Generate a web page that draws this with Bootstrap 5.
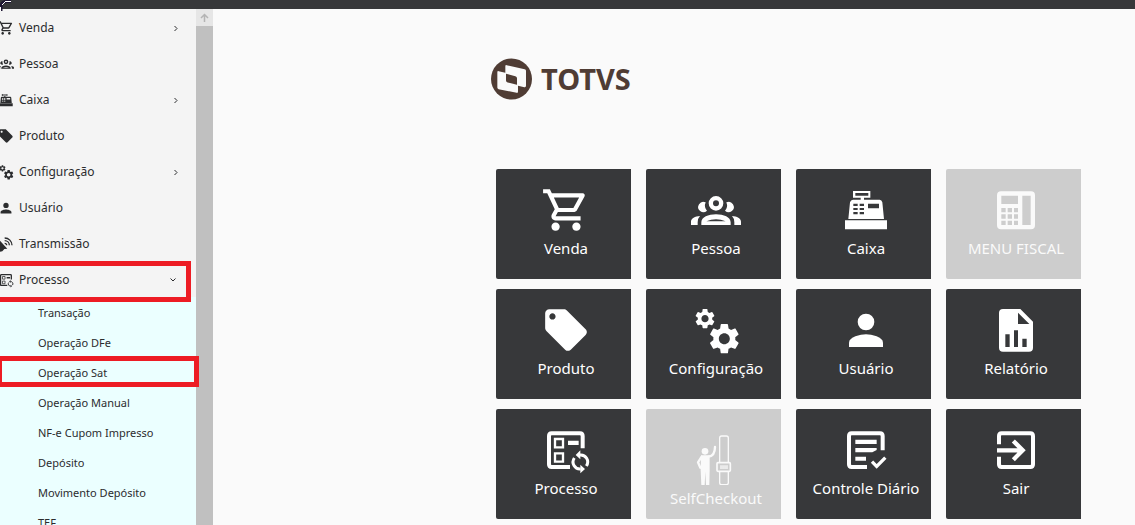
<!DOCTYPE html>
<html lang="pt-BR">
<head>
<meta charset="utf-8">
<meta name="viewport" content="width=device-width, initial-scale=1">
<title>TOTVS</title>
<link href="https://cdn.jsdelivr.net/npm/bootstrap@5.3.0/dist/css/bootstrap.min.css" rel="stylesheet">
<style>
  :root { --ink: #37383a; --panel: #f4f4f4; --sub: #ebffff; --alert: #ed1c24; }
  body { font-family: "Noto Sans", sans-serif; background: #fafafa; color: #2b2c2e; }
  .topbar { height: 9px; background: var(--ink); }
  .topbar svg { top: 0; left: 0; }
  .side-panel { width: 213px; }
  .side-menu { background: var(--panel); }
  .menu-link { height: 36px; padding: 2px 16px 0 0; gap: 5px; font-size: 12px; line-height: 18px; color: inherit; text-decoration: none; }
  .menu-link .glyph { width: 16px; height: 16px; margin-left: -2px; }
  .menu-link .chev { width: 8px; height: 8px; }
  .menu-link.is-open { padding-right: 19px; }
  .sub-menu { background: var(--sub); }
  .sub-link { height: 30px; padding: 2px 0 0 38px; font-size: 11px; line-height: 16px; color: inherit; text-decoration: none; }
  .hl { border: 5px solid var(--alert); pointer-events: none; z-index: 2; }
  .hl-group { left: -5px; right: 5px; top: 0; bottom: -5px; }
  .hl-item { left: -3px; right: -3px; top: -1px; bottom: 0; }
  .scroll-rail { width: 17px; background: #c0c0c0; }
  .scroll-up { height: 17px; background: #e6e6e6; }
  .workspace { padding-left: 229px; }
  .board { width: 585px; }
  .brand { margin: 49px 0 69px -5px; gap: 9px; color: #4f3c34; }
  .brand-name { font-size: 29px; line-height: 42px; font-weight: 700; }
  .tiles { display: grid; grid-template-columns: repeat(4, 135px); gap: 10px 15px; }
  .tile { height: 110px; padding: 16px 0 0 5px; border: 0; border-radius: 2px 0 0 2px; background: var(--ink); color: #fff; font-size: 15px; line-height: 22px; }
  .tile svg { width: 50px; height: 50px; margin-bottom: 2px; }
  .tile .tall { height: 60px; }
  .tile:disabled { background: #cdcdcd; color: #fafafa; }
</style>
</head>
<body class="vh-100 overflow-hidden d-flex flex-column">

<svg class="d-none" aria-hidden="true">
  <symbol id="i-cart" viewBox="0 0 24 24"><path fill="currentColor" d="M15.55 13c.75 0 1.41-.41 1.75-1.03l3.58-6.49A.996.996 0 0 0 20.01 4H5.21l-.94-2H1v2h2l3.6 7.59-1.35 2.44C4.52 15.37 5.48 17 7 17h12v-2H7l1.100-2h7.450zM6.160 6h12.150l-2.760 5H8.530L6.160 6zM7 18c-1.100 0-1.990.9-1.990 2S5.900 22 7 22s2-.9 2-2-.9-2-2-2zm10 0c-1.100 0-1.990.9-1.990 2s.89 2 1.990 2 2-.9 2-2-.9-2-2-2z"/></symbol>
  <symbol id="i-people" viewBox="0 0 150 150"><circle cx="75" cy="55" r="15.500" fill="none" stroke="currentColor" stroke-width="13"/><path fill="currentColor" fill-rule="evenodd" d="M44 52A15.500 15.500 0 1 0 48 77Q38 66 44 52zM106 52A15.500 15.500 0 1 1 102 77Q112 66 106 52zM31 120V112C31 96 52 88 75 88s44 8 44 24v8zM46 109H104Q75 97 46 109zM0 120V110C0 100 12 94 27 93Q20 100 20 112V120zM150 120V110C150 100 138 94 123 93Q130 100 130 112V120z"/></symbol>
  <symbol id="i-register" viewBox="0 0 150 150"><path fill="currentColor" fill-rule="evenodd" d="M36 18H88V38H69V44H116Q122 44 124 52L129 102H22L27 52Q29 44 36 44H59V38H36zM43 24V32H82V24zM81 56V70H114V56zM37 56h13v7H37zM56 56h13v7H56zM37 69h13v6H37zM56 69h13v6H56zM37 81h13v7H37zM56 81h13v7H56zM12 106H138V133H12z"/></symbol>
  <symbol id="i-calc" viewBox="0 0 150 150"><path fill="currentColor" fill-rule="evenodd" d="M30 19H120Q132 19 132 31V121Q132 133 120 133H30Q18 133 18 121V31Q18 19 30 19zM31 32V57H81V32zM94 32V120H119V32zM31 69h13v13H31zM50 69h13v13H50zM69 69h12v13H69zM31 88h13v13H31zM50 88h13v13H50zM69 88h12v13H69zM31 107h13v13H31zM50 107h13v13H50zM69 107h12v13H69z"/></symbol>
  <symbol id="i-tag" viewBox="0 0 24 24"><path fill="currentColor" d="M21.410 11.580l-9-9C12.050 2.220 11.550 2 11 2H4c-1.100 0-2 .9-2 2v7c0 .55.22 1.050.59 1.420l9 9c.36.36.86.58 1.410.58.55 0 1.050-.22 1.410-.59l7-7c.37-.36.59-.86.59-1.410 0-.55-.23-1.060-.59-1.420zM5.500 7C4.670 7 4 6.330 4 5.500S4.670 4 5.500 4 7 4.670 7 5.500 6.330 7 5.500 7z"/></symbol>
  <symbol id="i-gear" viewBox="0 0 24 24"><path fill="currentColor" d="M19.140 12.940c.04-.3.06-.61.06-.94 0-.32-.02-.64-.07-.94l2.030-1.580c.18-.14.23-.41.12-.61l-1.920-3.320c-.12-.22-.37-.29-.59-.22l-2.390.96c-.5-.38-1.030-.7-1.620-.94l-.36-2.540c-.04-.24-.24-.41-.48-.41h-3.840c-.24 0-.43.17-.47.41l-.36 2.540c-.59.24-1.130.57-1.620.94l-2.390-.96c-.22-.08-.47 0-.59.22L2.740 8.870c-.12.21-.08.47.12.61l2.030 1.580c-.05.3-.09.63-.09.94s.02.64.07.94l-2.030 1.580c-.18.14-.23.41-.12.61l1.920 3.320c.12.22.37.29.59.22l2.390-.96c.5.38 1.030.7 1.620.94l.36 2.540c.05.24.24.41.48.41h3.840c.24 0 .44-.17.47-.41l.36-2.540c.59-.24 1.130-.56 1.620-.94l2.390.96c.22.08.47 0 .59-.22l1.920-3.320c.12-.22.07-.47-.12-.61l-2.010-1.580zM12 15.600c-1.980 0-3.600-1.620-3.600-3.600s1.620-3.600 3.600-3.600 3.600 1.620 3.600 3.600-1.620 3.600-3.600 3.600z"/></symbol>
  <symbol id="i-gears" viewBox="0 0 150 150"><use href="#i-gear" x="6" y="5" width="72" height="72"/><use href="#i-gear" x="45" y="46" width="110" height="110"/></symbol>
  <symbol id="i-user" viewBox="0 0 150 150"><circle cx="75" cy="51" r="25" fill="currentColor"/><path fill="currentColor" d="M24 126V113C24 96 58 88 75 88s51 8 51 25v13z"/></symbol>
  <symbol id="i-dish" viewBox="0 0 48 48"><path fill="currentColor" d="M4 12L28 38 19 39 13 46 4 48z"/><path fill="none" stroke="currentColor" stroke-width="4" d="M20 6A22 22 0 0 1 42 28M20 14A14 14 0 0 1 34 28M20 22A6 6 0 0 1 26 28"/></symbol>
  <symbol id="i-report" viewBox="0 0 150 150"><path fill="currentColor" fill-rule="evenodd" d="M36 12H88L126 50V128Q126 140 114 140H36Q24 140 24 128V24Q24 12 36 12zM81 23V57H115zM43 88V126H56V88zM69 76V126H81V76zM94 101V126H107V101z"/></symbol>
  <symbol id="i-process" viewBox="0 0 150 150"><path fill="none" stroke="currentColor" stroke-width="12" d="M87 126H32Q24 126 24 118V33Q24 25 32 25H117Q125 25 125 33V70"/><path fill="none" stroke="currentColor" stroke-width="7" d="M42 42H66V67H42zM42 85H66V110H42z"/><path fill="currentColor" d="M81 47H113V60H81zM118 76V103L104 90zM118 119V145L132 132z"/><path fill="none" stroke="currentColor" stroke-width="9" d="M116 90A21 21 0 0 1 136 123M100 99A21 21 0 0 0 119 132"/></symbol>
  <symbol id="i-kiosk" viewBox="0 0 150 180"><circle cx="42" cy="79" r="10" fill="currentColor"/><path fill="currentColor" d="M30 91H56V136L55 180H45L43 140 41 180H31L29 136z"/><path fill="none" stroke="currentColor" stroke-width="7" stroke-linecap="round" stroke-linejoin="round" d="M32 95L21 112 28 128M53 95Q72 92 72 66"/><rect x="86" y="33" width="26" height="146" rx="6" fill="none" stroke="currentColor" stroke-width="4"/><rect x="78" y="113" width="40" height="26" rx="3" fill="#cdcdcd" stroke="currentColor" stroke-width="5"/><path stroke="currentColor" stroke-width="4" d="M90 121V132M96 121V132M102 121V132M108 121V132"/></symbol>
  <symbol id="i-control" viewBox="0 0 150 150"><path fill="none" stroke="currentColor" stroke-width="12" d="M78 126H32Q24 126 24 118V33Q24 25 32 25H117Q125 25 125 33V76"/><path fill="currentColor" d="M43 44H107V57H43zM43 69H107V75L94 82H43zM43 95H75V107H43z"/><path fill="none" stroke="currentColor" stroke-width="10" d="M93 110L107 124 133 98"/></symbol>
  <symbol id="i-exit" viewBox="0 0 150 150"><path fill="none" stroke="currentColor" stroke-width="12" d="M24 58V33Q24 25 32 25H118Q126 25 126 33V118Q126 126 118 126H32Q24 126 24 118V95"/><path fill="none" stroke="currentColor" stroke-width="13" d="M18 76H92M67 48L95 76 67 104"/></symbol>
  <symbol id="i-chev" viewBox="0 0 8 8"><path fill="none" stroke="currentColor" stroke-width="1" d="M2.500 2L5 4.500 2.500 7"/></symbol>
  <symbol id="i-chev-down" viewBox="0 0 8 8"><path fill="none" stroke="currentColor" stroke-width="1" d="M1.500 2.500L4 5 6.500 2.500"/></symbol>
</svg>

<header class="topbar flex-shrink-0 position-relative">
  <svg class="position-absolute" width="12" height="12" viewBox="0 0 12 12" fill="none" aria-hidden="true"><path stroke="#1e1633" stroke-width="3" d="M1 11V7Q1 2 6 1.500H11"/><path stroke="#fff" d="M.5 11V7M2 5L5 2M5 1.500H11"/></svg>
</header>

<div class="d-flex flex-grow-1 overflow-hidden">
  <aside class="side-panel d-flex flex-shrink-0">
    <nav class="side-menu flex-grow-1" aria-label="Menu principal">
      <a href="#" class="menu-link d-flex align-items-center"><svg class="glyph"><use href="#i-cart"/></svg>Venda<svg class="chev ms-auto"><use href="#i-chev"/></svg></a>
      <a href="#" class="menu-link d-flex align-items-center"><svg class="glyph"><use href="#i-people"/></svg>Pessoa</a>
      <a href="#" class="menu-link d-flex align-items-center"><svg class="glyph"><use href="#i-register"/></svg>Caixa<svg class="chev ms-auto"><use href="#i-chev"/></svg></a>
      <a href="#" class="menu-link d-flex align-items-center"><svg class="glyph"><use href="#i-tag"/></svg>Produto</a>
      <a href="#" class="menu-link d-flex align-items-center"><svg class="glyph"><use href="#i-gears"/></svg>Configuração<svg class="chev ms-auto"><use href="#i-chev"/></svg></a>
      <a href="#" class="menu-link d-flex align-items-center"><svg class="glyph"><use href="#i-user"/></svg>Usuário</a>
      <a href="#" class="menu-link d-flex align-items-center"><svg class="glyph"><use href="#i-dish"/></svg>Transmissão</a>
      <a href="#" class="menu-link is-open d-flex align-items-center position-relative"><svg class="glyph"><use href="#i-process"/></svg>Processo<svg class="chev ms-auto"><use href="#i-chev-down"/></svg><span class="hl hl-group position-absolute"></span></a>
      <div class="sub-menu">
        <a href="#" class="sub-link d-flex align-items-center">Transação</a>
        <a href="#" class="sub-link d-flex align-items-center">Operação DFe</a>
        <a href="#" class="sub-link d-flex align-items-center position-relative">Operação Sat<span class="hl hl-item position-absolute"></span></a>
        <a href="#" class="sub-link d-flex align-items-center">Operação Manual</a>
        <a href="#" class="sub-link d-flex align-items-center">NF-e Cupom Impresso</a>
        <a href="#" class="sub-link d-flex align-items-center">Depósito</a>
        <a href="#" class="sub-link d-flex align-items-center">Movimento Depósito</a>
        <a href="#" class="sub-link d-flex align-items-center">TEF</a>
      </div>
    </nav>
    <div class="scroll-rail" aria-hidden="true">
      <div class="scroll-up d-flex align-items-center justify-content-center"><svg width="9" height="9" viewBox="0 0 9 9" fill="none" stroke="#b4b4b4" stroke-width="1.500"><path d="M4.500 9V1.500M1 5L4.500 1.500 8 5"/></svg></div>
    </div>
  </aside>

  <main class="workspace flex-grow-1 d-flex justify-content-center">
    <div class="board">
      <div class="brand d-flex align-items-center">
        <svg width="41" height="42" viewBox="0 0 123 123" aria-hidden="true"><circle cx="61.500" cy="61.500" r="61.500" fill="currentColor"/><path fill="#fafafa" d="M47 20L101 32Q105 33 105 37V82Q105 87 100 86L81 82V99Q81 104 77 103L23 92Q19 91 19 87V41Q19 37 23 38L43 43V23Q43 19 47 20z"/><path fill="currentColor" d="M45 46L73 53Q78 54 78 59V79L50 72Q45 71 45 66z"/></svg>
        <span class="brand-name">TOTVS</span>
      </div>
      <div class="tiles">
        <button type="button" class="tile d-flex flex-column align-items-center"><svg><use href="#i-cart"/></svg>Venda</button>
        <button type="button" class="tile d-flex flex-column align-items-center"><svg><use href="#i-people"/></svg>Pessoa</button>
        <button type="button" class="tile d-flex flex-column align-items-center"><svg><use href="#i-register"/></svg>Caixa</button>
        <button type="button" class="tile d-flex flex-column align-items-center" disabled><svg><use href="#i-calc"/></svg>MENU FISCAL</button>
        <button type="button" class="tile d-flex flex-column align-items-center"><svg><use href="#i-tag"/></svg>Produto</button>
        <button type="button" class="tile d-flex flex-column align-items-center"><svg><use href="#i-gears"/></svg>Configuração</button>
        <button type="button" class="tile d-flex flex-column align-items-center"><svg><use href="#i-user"/></svg>Usuário</button>
        <button type="button" class="tile d-flex flex-column align-items-center"><svg><use href="#i-report"/></svg>Relatório</button>
        <button type="button" class="tile d-flex flex-column align-items-center"><svg><use href="#i-process"/></svg>Processo</button>
        <button type="button" class="tile d-flex flex-column align-items-center" disabled><svg class="tall"><use href="#i-kiosk"/></svg>SelfCheckout</button>
        <button type="button" class="tile d-flex flex-column align-items-center"><svg><use href="#i-control"/></svg>Controle Diário</button>
        <button type="button" class="tile d-flex flex-column align-items-center"><svg><use href="#i-exit"/></svg>Sair</button>
      </div>
    </div>
  </main>
</div>

<script src="https://cdn.jsdelivr.net/npm/bootstrap@5.3.0/dist/js/bootstrap.bundle.min.js"></script>
</body>
</html>
